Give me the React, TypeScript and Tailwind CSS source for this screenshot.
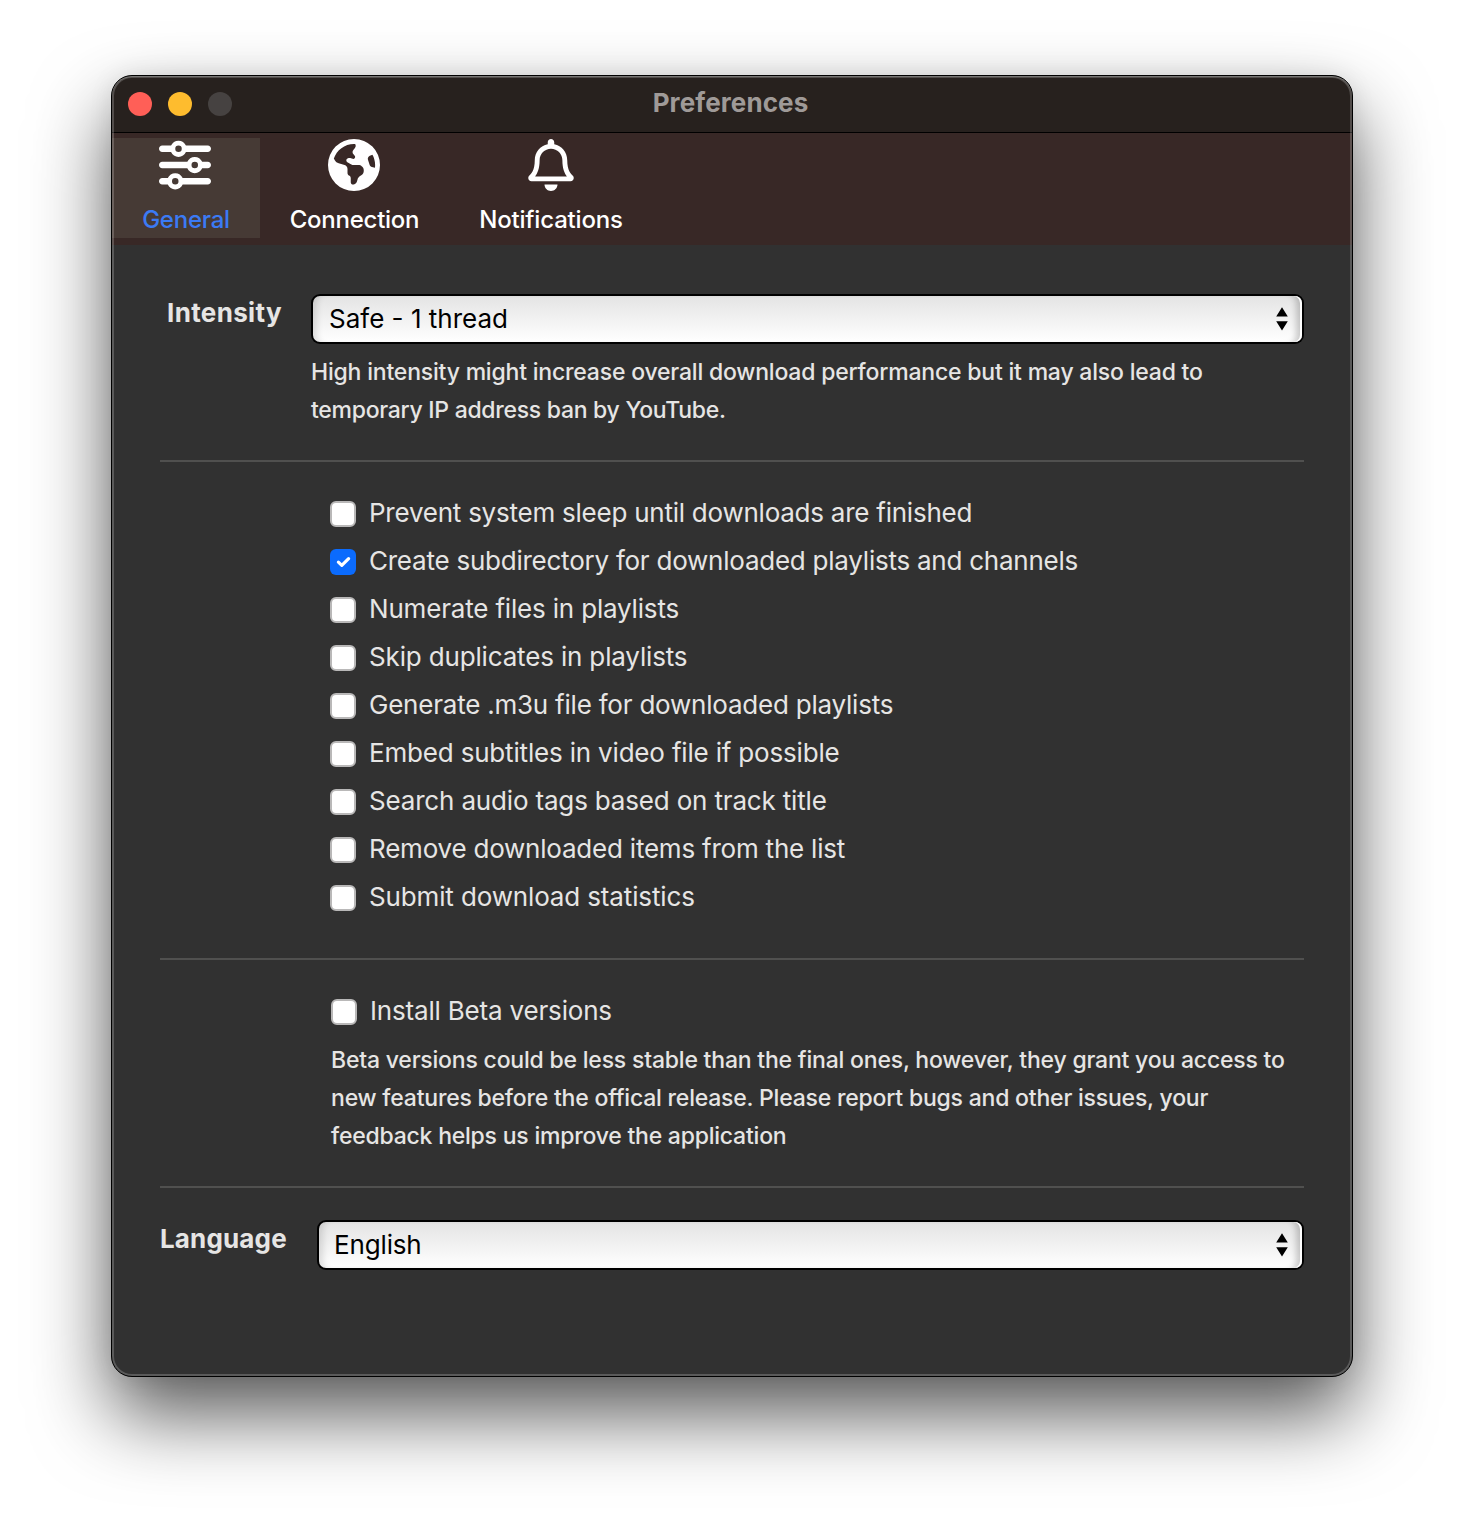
import type { ReactNode } from 'react';
import { FaRegBell } from 'react-icons/fa';
import { FaEarthAmericas, FaSliders } from 'react-icons/fa6';

type Option = { label: string; checked?: boolean; tracking: string };

const options: Option[] = [
  { label: 'Prevent system sleep until downloads are finished', tracking: 'tracking-[-0.24px]' },
  { label: 'Create subdirectory for downloaded playlists and channels', checked: true, tracking: 'tracking-[-0.238px]' },
  { label: 'Numerate files in playlists', tracking: 'tracking-[-0.18px]' },
  { label: 'Skip duplicates in playlists', tracking: 'tracking-[-0.16px]' },
  { label: 'Generate .m3u file for downloaded playlists', tracking: 'tracking-[-0.22px]' },
  { label: 'Embed subtitles in video file if possible', tracking: 'tracking-[-0.18px]' },
  { label: 'Search audio tags based on track title', tracking: 'tracking-[-0.17px]' },
  { label: 'Remove downloaded items from the list', tracking: 'tracking-[-0.215px]' },
  { label: 'Submit download statistics', tracking: 'tracking-[-0.14px]' },
];

function Tab({ icon, label, active = false, width, tracking }: { icon: ReactNode; label: string; active?: boolean; width: string; tracking: string }) {
  return (
    <button
      className={`flex h-[100px] flex-col items-center ${width} ${active ? 'bg-[#463a35] text-[#3b7af5]' : 'text-white'}`}
    >
      <span className={`flex h-[53px] items-center text-[52px] text-white ${active ? 'pr-[2px]' : 'pr-[1px]'}`}>{icon}</span>
      <span className={`mt-[13px] whitespace-nowrap text-[24px] leading-[32px] font-[450] ${tracking}`}>{label}</span>
    </button>
  );
}

function Checkbox({ checked = false }: { checked?: boolean }) {
  if (checked) {
    return (
      <span className="flex size-[26px] shrink-0 items-center justify-center rounded-[6px] bg-[#0b6bfd]">
        <svg width="26" height="26" viewBox="0 0 26 26" fill="none" stroke="#fff" strokeWidth="3.2" strokeLinecap="round" strokeLinejoin="round">
          <path d="M8.4 13.2l3.4 3.2 6.8-6.8" />
        </svg>
      </span>
    );
  }
  return <span className="size-[26px] shrink-0 rounded-[6px] border-2 border-[#b9b8b8] bg-white" />;
}

function CheckRow({ label, checked, tracking }: Option) {
  return (
    <label className="flex h-[48px] items-center gap-[13px]">
      <Checkbox checked={checked} />
      <span className={`pb-[2px] text-[26px] leading-[36px] whitespace-nowrap ${tracking}`}>{label}</span>
    </label>
  );
}

function Select({ value, tracking, pad }: { value: string; tracking: string; pad: string }) {
  return (
    <div className="h-[50px] flex-1 rounded-[9px] bg-black p-[2px]">
      <div className={`flex h-[46px] items-center justify-between rounded-[7px] bg-linear-to-b from-[#e4e4e4] to-white pr-[14px] text-black shadow-[inset_-2px_0_0_#fff,inset_-10px_0_6px_-4px_rgba(0,0,0,0.2),inset_8px_0_6px_-4px_rgba(0,0,0,0.12)] ${pad}`}>
        <span className={`text-[26px] leading-[36px] ${tracking}`}>{value}</span>
        <svg width="12" height="24" viewBox="0 0 12 24" fill="#000">
          <path d="M6 .2l5.8 9.3H.2zM6 23.6L11.8 14.3H.2z" />
        </svg>
      </div>
    </div>
  );
}

function Divider({ className }: { className: string }) {
  return <div className={`h-[2px] bg-[#50504f] ${className}`} />;
}

export default function App() {
  return (
    <div className="h-[1524px] w-[1464px] overflow-hidden bg-white pt-[75px] pl-[111px] font-['Inter',sans-serif] text-[#e6e5e4]">
      <div className="relative h-[1302px] w-[1242px] overflow-hidden rounded-[21px] border border-black bg-[#313131] shadow-[0_38px_78px_rgba(0,0,0,0.65),0_0_24px_rgba(0,0,0,0.08)]">
        <header className="flex h-[57px] items-center border-b border-black bg-[#27211e] pl-[16px]">
          <div className="flex w-[240px] gap-[16px]">
            <span className="size-[24px] rounded-full bg-[#ff5f57]" />
            <span className="size-[24px] rounded-full bg-[#febc2e]" />
            <span className="size-[24px] rounded-full bg-[#464241]" />
          </div>
          <h1 className="w-[725px] pb-[2px] text-center text-[26px] leading-[36px] font-bold tracking-[0.1px] text-[#9f9a98]">Preferences</h1>
        </header>

        <nav className="flex h-[112px] bg-[#382826] pt-[5px]">
          <Tab active icon={<FaSliders />} label="General" width="w-[148px]" tracking="tracking-[-0.25px]" />
          <Tab icon={<FaEarthAmericas />} label="Connection" width="w-[189px]" tracking="tracking-[-0.25px]" />
          <Tab icon={<FaRegBell />} label="Notifications" width="w-[204px]" tracking="tracking-[-0.17px]" />
        </nav>

        <main className="pt-[49px] pr-[48px] pl-[48px]">
          <section className="flex">
            <div className="mt-[1px] w-[151px] pl-[7px] text-[26px] leading-[36px] font-bold tracking-[0.35px]">Intensity</div>
            <div className="flex-1">
              <div className="flex">
                <Select value="Safe - 1 thread" tracking="tracking-[0px]" pad="pl-[16px]" />
              </div>
              <p className="mt-[9px] text-[23px] leading-[38px] font-[450] whitespace-nowrap">
                <span className="block tracking-[-0.195px]">High intensity might increase overall download performance but it may also lead to</span>
                <span className="block tracking-[-0.28px]">temporary IP address ban by YouTube.</span>
              </p>
            </div>
          </section>

          <Divider className="mt-[31px]" />

          <section className="mt-[28px] pl-[170px]">
            {options.map((o) => (
              <CheckRow key={o.label} {...o} />
            ))}
          </section>

          <Divider className="mt-[36px]" />

          <section className="mt-[28px] pl-[171px]">
            <CheckRow label="Install Beta versions" tracking="tracking-[-0.18px]" />
            <p className="mt-[5px] text-[23px] leading-[38px] font-[450] whitespace-nowrap">
              <span className="block tracking-[-0.2px]">Beta versions could be less stable than the final ones, however, they grant you access to</span>
              <span className="block tracking-[-0.205px]">new features before the offical release. Please report bugs and other issues, your</span>
              <span className="block tracking-[-0.22px]">feedback helps us improve the application</span>
            </p>
          </section>

          <Divider className="mt-[31px]" />

          <section className="mt-[32px] flex">
            <div className="mt-[1px] w-[157px] text-[26px] leading-[36px] font-bold tracking-[0.15px]">Language</div>
            <Select value="English" tracking="tracking-[-0.15px]" pad="pl-[15px]" />
          </section>
        </main>

        <div className="pointer-events-none absolute inset-0 rounded-[20px] shadow-[inset_0_1px_0_#777674,inset_0_0_0_2px_rgba(255,255,255,0.2)]" />
      </div>
    </div>
  );
}
